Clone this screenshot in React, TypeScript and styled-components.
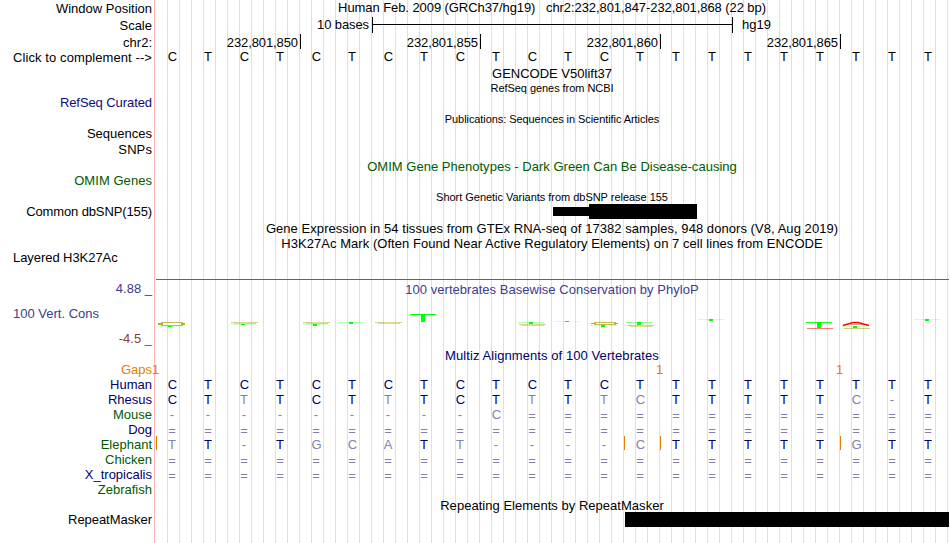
import React from "react";
import styled, { createGlobalStyle, css } from "styled-components";

const GlobalStyle = createGlobalStyle`
  body {
    margin: 0;
    background: #ffffff;
  }
`;

// Whole browser image
const Browser = styled.main`
  display: flex;
  width: 949px;
  height: 543px;
  overflow: hidden;
  font-family: "Liberation Sans", Arial, sans-serif;
  font-size: 13px;
  line-height: 15px;
  color: #000000;
`;

// Track names on the left
const LabelColumn = styled.div`
  box-sizing: border-box;
  display: flex;
  flex-direction: column;
  width: 155px;
  flex: none;
  padding: 0 2px 0 13px;
  border-right: 1px solid #ffb4b4;
`;

const Label = styled.div<{ $gap: number; $color?: string; $left?: boolean; $spacing?: number }>`
  height: 15px;
  flex: none;
  margin-top: ${(p) => p.$gap}px;
  text-align: ${(p) => (p.$left ? "left" : "right")};
  color: ${(p) => p.$color || "#000000"};
  letter-spacing: ${(p) => p.$spacing || 0}px;
  white-space: nowrap;
`;

// Data area with the vertical guide lines every 12px
const DataColumn = styled.div`
  display: flex;
  flex-direction: column;
  width: 794px;
  flex: none;
  background: repeating-linear-gradient(
      90deg,
      #dcdcff 0,
      #dcdcff 1px,
      transparent 1px,
      transparent 12px
    )
    12px 0 / 792px 100% no-repeat;
`;

const Title = styled.div<{ $gap?: number; $color?: string; $small?: boolean; $spacing?: number }>`
  height: ${(p) => (p.$small ? 13 : 15)}px;
  line-height: ${(p) => (p.$small ? 13 : 15)}px;
  flex: none;
  margin-top: ${(p) => p.$gap || 0}px;
  text-align: center;
  font-size: ${(p) => (p.$small ? 11 : 13)}px;
  color: ${(p) => p.$color || "#000000"};
  letter-spacing: ${(p) => p.$spacing || 0}px;
  white-space: pre;
`;

const ScaleRow = styled.div`
  display: flex;
  height: 16px;
  flex: none;
  margin-top: 2px;
`;

const ScaleText = styled.span`
  box-sizing: border-box;
  width: 217px;
  padding-right: 3px;
  text-align: right;
  letter-spacing: -0.1px;
`;

const ScaleBar = styled.div`
  box-sizing: border-box;
  width: 361px;
  height: 16px;
  border: solid #000000;
  border-width: 0 1px;
  background: linear-gradient(#000000, #000000) 0 7px / 100% 1px no-repeat;
`;

const ScaleName = styled.span`
  padding-left: 9px;
`;

const TickRow = styled.div`
  display: flex;
  height: 15px;
  flex: none;
  margin-top: 1px;
`;

const Tick = styled.div`
  box-sizing: border-box;
  width: 180px;
  height: 15px;
  padding: 1px 2px 0 0;
  border-right: 1px solid #000000;
  text-align: right;
  letter-spacing: -0.1px;

  &:first-child {
    width: 146px;
  }
`;

// One cell for each base, 22 in all
const BaseRow = styled.div<{ $gap?: number }>`
  display: grid;
  grid-template-columns: repeat(22, 36px);
  height: 15px;
  flex: none;
  margin-top: ${(p) => p.$gap || 0}px;
`;

const Base = styled.span<{ $color: string; $low?: boolean; $wide?: boolean; $insert?: boolean }>`
  position: relative;
  box-sizing: border-box;
  padding: ${(p) => (p.$low ? 1 : 0)}px ${(p) => (p.$wide ? 1 : 2)}px 0 0;
  text-align: center;
  color: ${(p) => p.$color};

  ${(p) =>
    p.$insert &&
    css`
      &::before {
        content: "";
        position: absolute;
        left: 1px;
        top: -1px;
        width: 1px;
        height: 14px;
        background: #e08200;
      }
    `}
`;

const GapCount = styled.span`
  margin-left: -3px;
  color: #e08200;
`;

const SnpTrack = styled.div`
  display: flex;
  align-items: center;
  height: 15px;
  flex: none;
  margin: 0 0 2px 398px;
`;

const Block = styled.div<{ $width: number; $height: number }>`
  width: ${(p) => p.$width}px;
  height: ${(p) => p.$height}px;
  background: #000000;
`;

const Baseline = styled.div`
  height: 1px;
  flex: none;
  margin: 28px 0 2px 1px;
  background: #c83264;
`;

const Logo = styled.svg`
  display: block;
  flex: none;
  margin: 13px 0 18px;
`;

const RepeatTrack = styled.div`
  height: 15px;
  flex: none;
  margin: -1px 0 0 470px;
  background: #000000;
`;

const NAVY = "#00006b";
const FADED = "#8080b5";
const GREEN = "#005a00";
const BLUE = "#0c0c78";

const labels = [
  { text: "Window Position", gap: 1 },
  { text: "Scale", gap: 2 },
  { text: "chr2:", gap: 2 },
  { text: "Click to complement -->", gap: 0, spacing: 0.09 },
  { text: "RefSeq Curated", gap: 30, color: BLUE, spacing: -0.08 },
  { text: "Sequences", gap: 16 },
  { text: "SNPs", gap: 1, spacing: 0.1 },
  { text: "OMIM Genes", gap: 16, color: GREEN, spacing: 0.05 },
  { text: "Common dbSNP(155)", gap: 16, spacing: -0.12 },
  { text: "Layered H3K27Ac", gap: 31, left: true, spacing: -0.06 },
  { text: "4.88 _", gap: 16, color: "#3c3c8c" },
  { text: "100 Vert. Cons", gap: 10, color: "#3c3c8c", left: true },
  { text: "-4.5 _", gap: 10, color: "#8c3c3c" },
  { text: "Gaps", gap: 16, color: "#e08200" },
  { text: "Human", gap: 0, color: NAVY },
  { text: "Rhesus", gap: 0, color: NAVY },
  { text: "Mouse", gap: 0, color: GREEN },
  { text: "Dog", gap: 0, color: NAVY },
  { text: "Elephant", gap: 0, color: GREEN },
  { text: "Chicken", gap: 0, color: GREEN },
  { text: "X_tropicalis", gap: 0, color: NAVY },
  { text: "Zebrafish", gap: 0, color: GREEN },
  { text: "RepeatMasker", gap: 15, spacing: -0.05 },
];

// Lower case marks a base that differs from human
const human = "CTCTCTCTCTCTCTTTTTTTTT";
const alignments = [
  { name: "Human", bases: human },
  { name: "Rhesus", bases: "CTtTCTtTCTtTtcTTTTTc-T" },
  { name: "Mouse", bases: "---------c============" },
  { name: "Dog", bases: "======================" },
  { name: "Elephant", bases: "tT-TgcaTt----cTTTTTgTT", inserts: [0, 13, 14, 19] },
  { name: "Chicken", bases: "======================" },
  { name: "X_tropicalis", bases: "======================" },
];

const Sequence: React.FC<{ bases: string; gap?: number; color: string; inserts?: number[] }> = ({
  bases,
  gap,
  color,
  inserts = [],
}) => (
  <BaseRow $gap={gap}>
    {bases.split("").map((base, i) => (
      <Base
        key={i}
        $color={/[A-Z]/.test(base) ? color : FADED}
        $low={base === "="}
        $wide={/[cg]/i.test(base)}
        $insert={inserts.includes(i)}
      >
        {base.toUpperCase()}
      </Base>
    ))}
  </BaseRow>
);

// Flattened T: a thin bar with its stem
const FlatT: React.FC<{ x: number; y: number; h: number; bar: number }> = ({ x, y, h, bar }) => (
  <g fill="#00ff00">
    <rect x={x} y={y} width="26" height="1" opacity={bar} />
    <rect x={x + 11} y={y} width="4" height={h} />
  </g>
);

// Flattened C: a squashed ring that is open on the right
const FlatC: React.FC<{ x: number; y: number; h: number; strong?: boolean }> = ({ x, y, h, strong }) => (
  <g fill="#a8a000" opacity={strong ? 0.85 : 0.5}>
    <rect x={x + 3} y={y} width="22" height="1" opacity="0.8" />
    <rect x={x + 3} y={y + h - 1} width="22" height="1" opacity="0.8" />
    <rect x={x} y={y + (h > 2 ? 1 : 0)} width="5" height={Math.max(1, h - 2)} />
    <rect x={x + 23} y={y + (h > 2 ? 1 : 0)} width="4" height={Math.max(1, h - 2)} />
  </g>
);

const App: React.FC = () => {
  return (
    <>
      <GlobalStyle />
      <Browser>
        <LabelColumn>
          {labels.map((l) => (
            <Label key={l.text} $gap={l.gap} $color={l.color} $left={l.left} $spacing={l.spacing}>
              {l.text}
            </Label>
          ))}
        </LabelColumn>

        <DataColumn>
          <Title $spacing={-0.075}>
            {"Human Feb. 2009 (GRCh37/hg19)   chr2:232,801,847-232,801,868 (22 bp)"}
          </Title>
          <ScaleRow>
            <ScaleText>10 bases</ScaleText>
            <ScaleBar />
            <ScaleName>hg19</ScaleName>
          </ScaleRow>
          <TickRow>
            <Tick>232,801,850</Tick>
            <Tick>232,801,855</Tick>
            <Tick>232,801,860</Tick>
            <Tick>232,801,865</Tick>
          </TickRow>
          <Sequence bases={human} color="#000000" />

          <Title $gap={2}>GENCODE V50lift37</Title>
          <Title $small $gap={1} $spacing={-0.05}>
            RefSeq genes from NCBI
          </Title>
          <Title $small $gap={18} $spacing={-0.07}>
            Publications: Sequences in Scientific Articles
          </Title>
          <Title $gap={33} $color={GREEN} $spacing={0.02}>
            OMIM Gene Phenotypes - Dark Green Can Be Disease-causing
          </Title>
          <Title $small $gap={17} $spacing={-0.03}>
            Short Genetic Variants from dbSNP release 155
          </Title>
          <SnpTrack>
            <Block $width={36} $height={9} />
            <Block $width={108} $height={15} />
          </SnpTrack>
          <Title $spacing={0.055}>
            Gene Expression in 54 tissues from GTEx RNA-seq of 17382 samples, 948 donors (V8, Aug 2019)
          </Title>
          <Title $spacing={0.045}>
            H3K27Ac Mark (Often Found Near Active Regulatory Elements) on 7 cell lines from ENCODE
          </Title>

          {/* Conservation */}
          <Baseline />
          <Title $color="#3c3c8c" $spacing={0.03}>
            100 vertebrates Basewise Conservation by PhyloP
          </Title>
          <Logo width="794" height="20" viewBox="155 310 794 20" shapeRendering="crispEdges">
            <FlatC x={158} y={322} h={4} strong />
            <FlatT x={157} y={326} h={1} bar={0.15} />
            <FlatC x={231} y={322} h={2} />
            <FlatT x={230} y={324} h={1} bar={0.15} />
            <FlatC x={303} y={322} h={2} />
            <FlatT x={302} y={324} h={2} bar={0.2} />
            <FlatT x={338} y={322} h={2} bar={0.3} />
            <FlatC x={375} y={322} h={2} />
            <FlatT x={410} y={314} h={8} bar={1} />
            <FlatT x={518} y={322} h={2} bar={0.3} />
            <FlatC x={519} y={324} h={2} />
            <FlatT x={554} y={321} h={1} bar={0.15} />
            <FlatC x={591} y={322} h={3} strong />
            <FlatT x={590} y={325} h={2} bar={0.2} />
            <FlatT x={626} y={322} h={3} bar={0.45} />
            <FlatC x={627} y={325} h={2} />
            <FlatT x={698} y={319} h={2} bar={0.2} />
            <FlatT x={806} y={322} h={6} bar={0.9} />
            <rect x="807" y="328" width="26" height="1" fill="#ff0000" opacity="0.5" />
            <path
              d="M843 325.5 L853 322.5 H858 L869 325.5"
              fill="none"
              stroke="#ff0000"
              strokeWidth="1.4"
              shapeRendering="auto"
            />
            <rect x="850" y="324" width="13" height="1" fill="#ff0000" opacity="0.4" />
            <FlatT x={842} y={326} h={2} bar={0.2} />
            <rect x="844" y="328" width="26" height="1" fill="#a8a000" opacity="0.5" />
            <FlatT x={914} y={319} h={2} bar={0.2} />
          </Logo>

          {/* Multiple alignment */}
          <Title $color={NAVY} $spacing={0.08}>
            Multiz Alignments of 100 Vertebrates
          </Title>
          <BaseRow $gap={-1}>
            {human.split("").map((_, i) => (
              <GapCount key={i}>{[0, 14, 19].includes(i) ? "1" : ""}</GapCount>
            ))}
          </BaseRow>
          {alignments.map((a) => (
            <Sequence key={a.name} bases={a.bases} color={NAVY} inserts={a.inserts} />
          ))}

          <Title $gap={16} $spacing={0.03}>
            Repeating Elements by RepeatMasker
          </Title>
          <RepeatTrack />
        </DataColumn>
      </Browser>
    </>
  );
};

export default App;
